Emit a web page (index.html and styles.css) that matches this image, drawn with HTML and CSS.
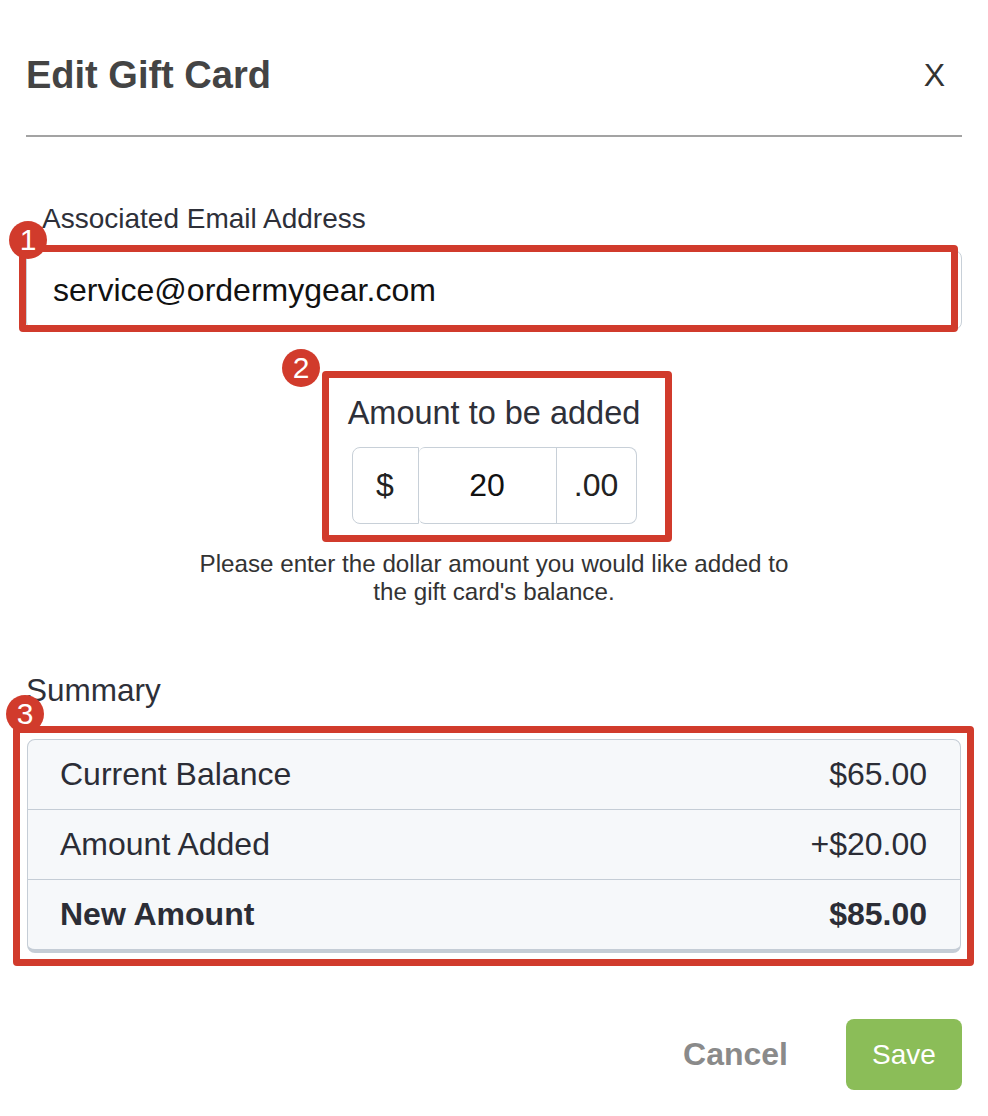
FILE: index.html
```html
<!DOCTYPE html>
<html lang="en">
<head>
    <meta charset="UTF-8">
    <meta name="viewport" content="width=device-width, initial-scale=1.0">
    <title>Edit Gift Card</title>
    <link rel="stylesheet" href="styles.css">
</head>
<body>
<div class="page">
    <div class="modal">
        <div class="modal-header">
            <h2 class="modal-title">Edit Gift Card</h2>
            <span class="close-btn">X</span>
        </div>

        <div class="field">
            <label class="field-label" for="giftEmail">Associated Email Address</label>
            <input type="email" id="giftEmail" class="input-field" value="service@ordermygear.com">
        </div>

        <div class="amount-block">
            <div class="amount-label">Amount to be added</div>
            <div class="input-group">
                <span class="addon addon-left">$</span>
                <input type="text" class="amount-input" value="20">
                <span class="addon addon-right">.00</span>
            </div>
            <p class="help-text">Please enter the dollar amount you would like added to the gift card's balance.</p>
        </div>

        <div class="summary">
            <div class="summary-title">Summary</div>
            <div class="summary-table">
                <div class="summary-row">
                    <span>Current Balance</span>
                    <span>$65.00</span>
                </div>
                <div class="summary-row">
                    <span>Amount Added</span>
                    <span>+$20.00</span>
                </div>
                <div class="summary-row total-row">
                    <span>New Amount</span>
                    <span>$85.00</span>
                </div>
            </div>
        </div>

        <div class="modal-footer">
            <button class="cancel-btn">Cancel</button>
            <button class="save-btn">Save</button>
        </div>
    </div>

    <!-- annotation overlay -->
    <div class="mark-box box-1"></div>
    <div class="mark-box box-2"></div>
    <div class="mark-box box-3"></div>
    <span class="mark-badge badge-1">1</span>
    <span class="mark-badge badge-2">2</span>
    <span class="mark-badge badge-3">3</span>
</div>
</body>
</html>
```

FILE: styles.css
```css
body {
    margin: 0;
    font-family: "Liberation Sans", Arial, Helvetica, sans-serif;
    background: #fff;
    color: #2e3039;
}
.page {
    position: relative;
    width: 988px;
    height: 1116px;
    overflow: hidden;
}
.modal {
    padding: 0 26px;
}
.modal-header {
    display: flex;
    justify-content: space-between;
    align-items: center;
    padding: 52px 0 37px;
    border-bottom: 2px solid #a3a3a3;
}
.modal-title {
    margin: 0;
    font-size: 38px;
    line-height: 46px;
    font-weight: bold;
    color: #444;
}
.close-btn {
    font-size: 32px;
    line-height: 46px;
    color: #333;
    margin-right: 17px;
}
.field {
    margin-top: 66px;
}
.field-label {
    display: block;
    margin-left: 16px;
    font-size: 28px;
    line-height: 32px;
}
.input-field {
    display: block;
    box-sizing: border-box;
    width: 100%;
    height: 80px;
    margin-top: 15px;
    padding: 0 26px;
    border: 1px solid #c8d0d8;
    border-radius: 8px;
    font-family: inherit;
    font-size: 32px;
    color: #111;
    background: #fff;
}
.amount-block {
    display: flex;
    flex-direction: column;
    align-items: center;
    margin-top: 65px;
}
.amount-label {
    font-size: 32.5px;
    line-height: 36px;
}
.input-group {
    display: flex;
    height: 77px;
    margin-top: 16px;
}
.addon, .amount-input {
    box-sizing: border-box;
    display: flex;
    align-items: center;
    justify-content: center;
    border: 1px solid #c8d0d8;
    font-family: inherit;
    font-size: 32px;
    color: #222;
    background: #fff;
}
.addon-left {
    width: 67px;
    border-radius: 8px 0 0 8px;
}
.amount-input {
    width: 138px;
    height: 77px;
    border-left: none;
    border-radius: 6px 0 0 6px;
    text-align: center;
    color: #111;
    padding: 0;
}
.addon-right {
    width: 80px;
    border-left: none;
    border-radius: 0 8px 8px 0;
}
.help-text {
    max-width: 620px;
    margin: 26px 0 0;
    font-size: 24.2px;
    line-height: 28px;
    text-align: center;
    color: #333;
}
.summary {
    margin-top: 66px;
}
.summary-title {
    font-size: 31.5px;
    line-height: 36px;
}
.summary-table {
    margin: 31px 1px 0;
    background: #f6f8fa;
    border: 1px solid #c5cdd6;
    border-bottom-width: 4px;
    border-radius: 8px;
}
.summary-row {
    display: flex;
    justify-content: space-between;
    align-items: center;
    height: 69px;
    padding: 0 33px 0 32px;
    font-size: 32px;
    color: #2b2d36;
}
.summary-row + .summary-row {
    border-top: 1px solid #c5cdd6;
}
.total-row {
    font-weight: bold;
}
.modal-footer {
    display: flex;
    justify-content: flex-end;
    align-items: center;
    gap: 58px;
    margin-top: 66px;
}
.cancel-btn {
    padding: 0;
    border: none;
    background: none;
    font-family: inherit;
    font-size: 32px;
    font-weight: bold;
    color: #8a8a8a;
    cursor: pointer;
}
.save-btn {
    width: 116px;
    height: 71px;
    border: none;
    border-radius: 8px;
    background-color: #8bbd58;
    color: #fff;
    font-family: inherit;
    font-size: 28px;
    cursor: pointer;
}
.mark-box {
    position: absolute;
    box-sizing: border-box;
    border: 7px solid #d13b2c;
    border-radius: 4px;
}
.box-1 { left: 19px; top: 245px; width: 939px; height: 87px; }
.box-2 { left: 322px; top: 371px; width: 350px; height: 171px; }
.box-3 { left: 13px; top: 726px; width: 961px; height: 240px; }
.mark-badge {
    position: absolute;
    width: 38px;
    height: 38px;
    border-radius: 50%;
    background: #d13b2c;
    color: #fff;
    font-size: 30px;
    line-height: 38px;
    text-align: center;
}
.badge-1 { left: 9px; top: 221px; }
.badge-2 { left: 282px; top: 349px; }
.badge-3 { left: 6px; top: 695px; }
```
